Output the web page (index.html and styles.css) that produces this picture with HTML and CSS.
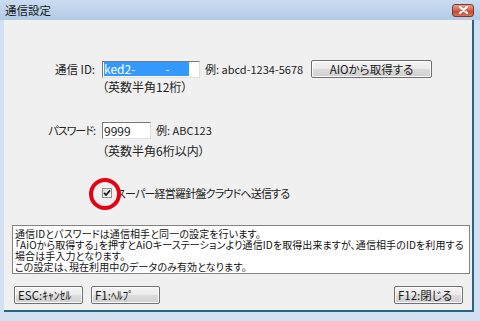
FILE: index.html
```html
<!DOCTYPE html>
<html lang="ja">
<head>
<meta charset="utf-8">
<title>通信設定</title>
<link rel="stylesheet" href="styles.css">
</head>
<body>
<div class="window">
  <div class="titlebar">
    <span class="title">通信設定</span>
    <span class="close"><svg width="11" height="8" viewBox="0 0 11 8"><path d="M2 1 L9 7 M9 1 L2 7" stroke="#fff" stroke-width="2.2" stroke-linecap="round"/></svg></span>
  </div>
  <div class="client">
    <div class="row row-id">
      <span class="lbl">通信 ID:</span>
      <span class="input input-id"><span class="sel">ked2-<span class="sel-dash">-</span></span></span>
      <span class="ex ex-id">例: abcd-1234-5678</span>
      <button class="btn btn-aio">AIOから取得する</button>
    </div>
    <div class="hint hint-id">（英数半角12桁）</div>
    <div class="row row-pw">
      <span class="lbl lbl-kana">パスワード:</span>
      <span class="input input-pw">9999</span>
      <span class="ex">例: ABC123</span>
    </div>
    <div class="hint hint-pw">（英数半角6桁以内）</div>
    <label class="check-row">
      <span class="checkbox"><svg width="8" height="8" viewBox="0 0 8 8"><path d="M1 3.8 L3.1 6 L7 1.4" fill="none" stroke="#1a1a1a" stroke-width="1.7"/></svg></span>
      <span class="check-text">スーパー経営羅針盤クラウドへ送信する</span>
    </label>
    <div class="note">通信IDとパスワードは通信相手と同一の設定を行います。<br>「AiOから取得する」を押すとAiOキーステーションより通信IDを取得出来ますが、通信相手のIDを利用する<br>場合は手入力となります。<br>この設定は、現在利用中のデータのみ有効となります。</div>
    <div class="footer">
      <button class="btn btn-foot">ESC:ｷｬﾝｾﾙ</button>
      <button class="btn btn-foot">F1:ﾍﾙﾌﾟ</button>
      <button class="btn btn-foot btn-close">F12:閉じる</button>
    </div>
  </div>
  <div class="ring"></div>
</div>
</body>
</html>
```
FILE: styles.css
```css
* { box-sizing: border-box; }
html, body { margin: 0; padding: 0; }
body {
  font-family: "Noto Sans CJK JP", "Noto Sans", sans-serif;
  font-feature-settings: "palt";
  color: #000;
}
.window {
  position: relative;
  width: 480px;
  height: 321px;
  background: #d2e0f1;
  display: flex;
  flex-direction: column;
  overflow: hidden;
}
.titlebar {
  height: 20px;
  flex: none;
  display: flex;
  align-items: center;
  padding-left: 5px;
  background: linear-gradient(#cadcf1, #b3cbe7);
}
.title {
  font-size: 11.5px;
  line-height: 14px;
  color: #1a1a1a;
}
.close {
  margin-left: auto;
  margin-right: 6px;
  width: 22px;
  height: 13px;
  border: 1px solid #7a3a2e;
  border-radius: 3px;
  background: linear-gradient(#e6a08c, #d0614a 50%, #c2412b 51%, #d8735c);
  display: flex;
  align-items: center;
  justify-content: center;
}
.close svg { display: block; }
.client {
  flex: 1;
  margin: 0 6px 9px 4px;
  background: #f0f0f0;
  border-right: 2px solid #2a6380;
  border-bottom: 2px solid #2a6380;
  display: flex;
  flex-direction: column;
}
.row {
  display: flex;
  align-items: center;
  height: 18px;
}
.row-id { margin-top: 40px; }
.row-pw { margin-top: 27px; }
.lbl {
  width: 95px;
  padding-right: 4px;
  text-align: right;
  font-size: 11.5px;
  line-height: 14px;
  color: #222;
}
.lbl-kana {
  font-size: 11px;
  letter-spacing: -1px;
}
.input {
  margin-left: 3px;
  height: 17px;
  background: #fff;
  border-top: 1px solid #7a7a7a;
  border-left: 1px solid #7a7a7a;
  border-right: 1px solid #e0e0e0;
  border-bottom: 1px solid #e0e0e0;
  font-size: 12px;
  line-height: 15px;
  padding-left: 1px;
  display: flex;
  align-items: center;
}
.input-id { width: 98px; }
.input-pw { width: 49px; color: #222; }
.sel {
  display: inline-block;
  width: 85px;
  height: 14px;
  line-height: 14px;
  background: #3399ff;
  color: #fff;
}
.sel-dash { margin-left: 30px; }
.ex {
  margin-left: 5px;
  font-size: 11px;
  line-height: 13px;
  color: #222;
}
.ex-id { width: 106px; }
.hint {
  margin-left: 98px;
  font-size: 12px;
  line-height: 14px;
  color: #222;
}
.hint-id { margin-top: 2px; }
.hint-pw { margin-top: 5px; }
.btn {
  font-family: inherit;
  font-feature-settings: "palt";
  font-size: 11.5px;
  line-height: 14px;
  color: #1a1a1a;
  height: 18px;
  padding: 0;
  border: 1px solid #707070;
  border-radius: 2px;
  background: linear-gradient(#f4f4f4, #ebebeb 50%, #dcdcdc 51%, #cfcfcf);
  box-shadow: inset 0 0 0 1px #fcfcfc;
}
.btn-aio { width: 121px; }
.check-row {
  margin-top: 28px;
  margin-left: 98px;
  height: 14px;
  display: flex;
  align-items: center;
}
.checkbox {
  width: 10px;
  height: 10px;
  border: 1px solid #8e8f8f;
  background: linear-gradient(135deg, #dcdcdc, #fbfbfb);
  display: flex;
  align-items: center;
  justify-content: center;
}
.checkbox svg { display: block; }
.check-text {
  margin-left: 4px;
  font-size: 11px;
  letter-spacing: -0.8px;
  line-height: 14px;
  color: #222;
}
.note {
  margin: 25px 2px 0 8px;
  height: 49px;
  background: #fff;
  border: 1px solid #828282;
  padding: 2px 0 0 2px;
  font-size: 10px;
  letter-spacing: 0.1px;
  line-height: 11px;
  white-space: nowrap;
  overflow: hidden;
  color: #111;
}
.footer {
  margin-top: 12px;
  padding: 0 9px 0 10px;
  display: flex;
  gap: 8px;
}
.btn-foot {
  width: 69px;
  text-align: left;
  padding-left: 3px;
}
.btn-close { margin-left: auto; }
.ring {
  position: absolute;
  left: 89px;
  top: 178px;
  width: 32px;
  height: 32px;
  border: 4px solid #e60012;
  border-radius: 50%;
}
```
